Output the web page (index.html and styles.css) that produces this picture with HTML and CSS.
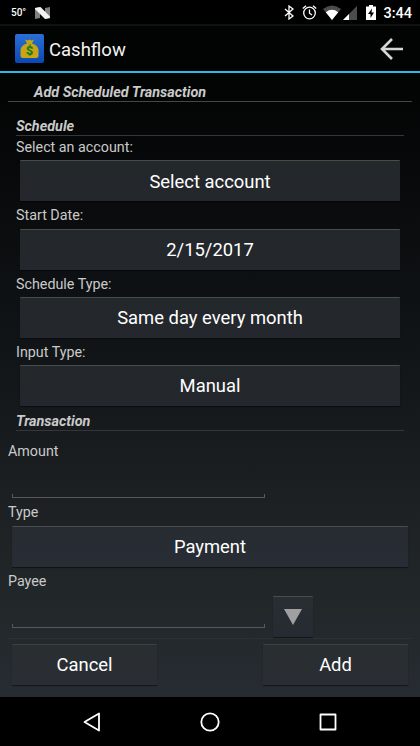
FILE: index.html
```html
<!DOCTYPE html>
<html lang="en">
<head>
    <meta charset="UTF-8">
    <meta name="viewport" content="width=device-width, initial-scale=1.0">
    <title>Cashflow</title>
    <link rel="stylesheet" href="styles.css">
</head>
<body>

<div class="status-bar">
    <span class="temp">50°</span>
    <svg class="logo-n" width="15" height="12" viewBox="0 0 15 12">
        <path d="M0 1L5 0V11L0 12Z" fill="#808080"/>
        <path d="M10 1L15 0V11L10 12Z" fill="#808080"/>
        <path d="M0 1L5.500 0L15 9.500V11L10 12L0 2Z" fill="#f2f2f2"/>
    </svg>
    <div class="status-icons">
        <svg width="10" height="15" viewBox="0 0 10 15">
            <path d="M1 4L9 11L5 14V1L9 4L1 11" fill="none" stroke="#fff" stroke-width="1.300"/>
        </svg>
        <svg class="alarm" width="15" height="15" viewBox="0 0 15 15">
            <g fill="none" stroke="#fff" stroke-width="1.300">
                <circle cx="7.500" cy="8" r="5.800"/>
                <path d="M7.500 4.500V8.200L10 10M0.800 3.500L4 0.800M14.200 3.500L11 0.800"/>
            </g>
        </svg>
        <svg class="wifi" width="18" height="15" viewBox="0 0 18 15">
            <path d="M0 4Q9 -3 18 4L9 15Z" fill="#4c4c4c"/>
            <path d="M2.800 7.200Q9 2.500 15.200 7.200L9 15Z" fill="#fff"/>
        </svg>
        <svg class="signal" width="14" height="14" viewBox="0 0 14 14">
            <path d="M14 0V14H0Z" fill="#4c4c4c"/>
            <path d="M6 8V14H0Z" fill="#fff"/>
        </svg>
        <svg class="battery" width="10" height="15" viewBox="0 0 10 15">
            <path d="M0 1.500H3V0H7V1.500H10V15H0Z" fill="#fff"/>
            <path d="M6 3.500L2 9H4.500V13L8 7.500H5.500Z" fill="#000"/>
        </svg>
    </div>
    <span class="clock">3:44</span>
</div>

<div class="header">
    <svg class="app-icon" width="29" height="29" viewBox="0 0 29 29">
        <defs>
            <linearGradient id="blue" x1="0" y1="0" x2="0" y2="1">
                <stop offset="0" stop-color="#2a70d6"/>
                <stop offset="1" stop-color="#0a48b4"/>
            </linearGradient>
        </defs>
        <rect width="29" height="29" rx="2" fill="url(#blue)"/>
        <path d="M10 5.500L12.500 6.500L14.500 5.500L16.500 6.500L19 5.500L17 9.500Q23 11 23.500 16V22Q23.500 24 21 24H8Q5.500 24 5.500 22V16Q6 11 12 9.500Z" fill="#c9a414"/>
        <text x="14.500" y="21.300" text-anchor="middle" class="dollar">$</text>
    </svg>
    <span class="app-name">Cashflow</span>
    <svg class="back" width="24" height="22" viewBox="0 0 24 22">
        <path d="M23 11H2M12 1L2 11L12 21" fill="none" stroke="#d6d6d6" stroke-width="2.600"/>
    </svg>
</div>

<div class="content">
    <div class="page-title">Add Scheduled Transaction</div>

    <div class="schedule">
        <div class="section">Schedule</div>
        <div class="label first">Select an account:</div>
        <button class="btn">Select account</button>
        <div class="label">Start Date:</div>
        <button class="btn">2/15/2017</button>
        <div class="label">Schedule Type:</div>
        <button class="btn">Same day every month</button>
        <div class="label">Input Type:</div>
        <button class="btn">Manual</button>
        <div class="section second">Transaction</div>
    </div>

    <div class="transaction">
        <div class="label amount">Amount</div>
        <div class="field"></div>
        <div class="label type">Type</div>
        <button class="btn">Payment</button>
        <div class="label payee">Payee</div>
        <div class="payee-row">
            <div class="field"></div>
            <button class="btn drop">
                <svg width="18" height="16" viewBox="0 0 18 16"><path d="M0 0H18L9 16Z" fill="#a0a0a0"/></svg>
            </button>
        </div>
    </div>

    <div class="footer">
        <button class="btn">Cancel</button>
        <button class="btn">Add</button>
    </div>
</div>

<div class="nav-bar">
    <svg width="20" height="20" viewBox="0 0 20 20"><path d="M17 1.500V18.500L2.500 10Z"/></svg>
    <svg width="20" height="20" viewBox="0 0 20 20"><circle cx="10" cy="10" r="8.700"/></svg>
    <svg width="20" height="20" viewBox="0 0 20 20"><rect x="2.500" y="2.500" width="15" height="15"/></svg>
</div>

</body>
</html>
```
FILE: styles.css
```css
* {
    box-sizing: border-box;
}

body {
    display: flex;
    flex-direction: column;
    width: 420px;
    height: 746px;
    margin: 0;
    overflow: hidden;
    background-color: #000;
    color: #cacaca;
    font-family: Roboto, sans-serif;
}

svg {
    display: block;
    flex: none;
}

.status-bar {
    display: flex;
    align-items: center;
    height: 26px;
    padding: 1px 8px 0 11px;
    border-bottom: 2px solid #101010;
    color: #fff;
}

.temp {
    width: 24px;
    font-size: 10px;
    font-weight: 500;
}

.status-icons {
    display: flex;
    align-items: center;
    margin-left: auto;
}

.alarm {
    margin-left: 8px;
}

.wifi {
    margin-left: 6px;
}

.signal {
    margin-left: 2px;
}

.battery {
    margin-left: 9px;
}

.clock {
    margin-left: 7px;
    padding-top: 1px;
    font-size: 14.500px;
    font-weight: 500;
}

.header {
    display: flex;
    align-items: center;
    height: 47px;
    padding: 0 16px 0 15px;
    border-bottom: 2px solid #33b5e5;
    background-color: #020303;
}

.dollar {
    fill: #16801a;
    font-size: 13px;
    font-weight: 900;
}

.app-name {
    margin-left: 5px;
    padding-top: 2px;
    color: #f3f3f3;
    font-size: 18.500px;
}

.back {
    margin-left: auto;
}

.content {
    height: 624px;
    padding: 9px 8px 0;
    background-image: linear-gradient(#020303, #090b0c 20%, #13171a 50%, #1d2124 70%, #22272a 85%, #272c33);
}

.page-title {
    height: 20px;
    padding-left: 26px;
    border-bottom: 1px solid #454747;
    font-size: 14.400px;
    font-style: italic;
    font-weight: 700;
    line-height: 22px;
}

.schedule {
    padding: 15px 8px 0;
}

.section {
    height: 19px;
    border-bottom: 1px solid #34373a;
    font-size: 14.400px;
    font-style: italic;
    font-weight: 700;
    line-height: 19px;
}

.second {
    height: 24.600px;
    padding-top: 6px;
}

.label {
    height: 27.200px;
    font-size: 14.300px;
    line-height: 29px;
}

.first {
    height: 24.400px;
    line-height: 23px;
}

.btn {
    display: flex;
    align-items: center;
    justify-content: center;
    height: 41px;
    padding: 0;
    border: 0;
    border-top: 1px solid #474c4f;
    border-radius: 1px;
    background: linear-gradient(#23282b, #24272d);
    box-shadow: 0 1px 1px rgba(0, 0, 0, 0.5);
    color: #fff;
    font-family: inherit;
    font-size: 18.400px;
}

.schedule .btn,
.transaction > .btn {
    width: calc(100% - 8px);
    margin: 0 4px;
}

.transaction .btn {
    background: linear-gradient(#272c32, #282c34);
}

.field {
    width: 253px;
    height: 4px;
    margin-left: 4px;
    border: 1px solid #55595c;
    border-top: 0;
}

.amount {
    height: 63px;
    line-height: 40px;
}

.type {
    height: 28px;
    line-height: 29px;
}

.payee {
    height: 29px;
    line-height: 28px;
}

.payee-row {
    display: flex;
    align-items: flex-end;
    gap: 8px;
}

.payee-row .field {
    margin-bottom: 9px;
}

.transaction .drop {
    width: 40px;
    background: linear-gradient(#292e33, #262b33);
}

.footer {
    display: flex;
    justify-content: space-between;
    margin-top: 1px;
    padding: 5px 4px 0;
    border-top: 1px solid #302e31;
}

.footer .btn {
    width: 145px;
    border-top-color: #3b4043;
    background: linear-gradient(#292e31, #2a2e34);
}

.nav-bar {
    display: flex;
    align-items: center;
    justify-content: space-between;
    height: 49px;
    padding: 0 82px;
}

.nav-bar svg {
    fill: none;
    stroke: #fff;
    stroke-width: 1.800;
    stroke-linejoin: round;
}
```
